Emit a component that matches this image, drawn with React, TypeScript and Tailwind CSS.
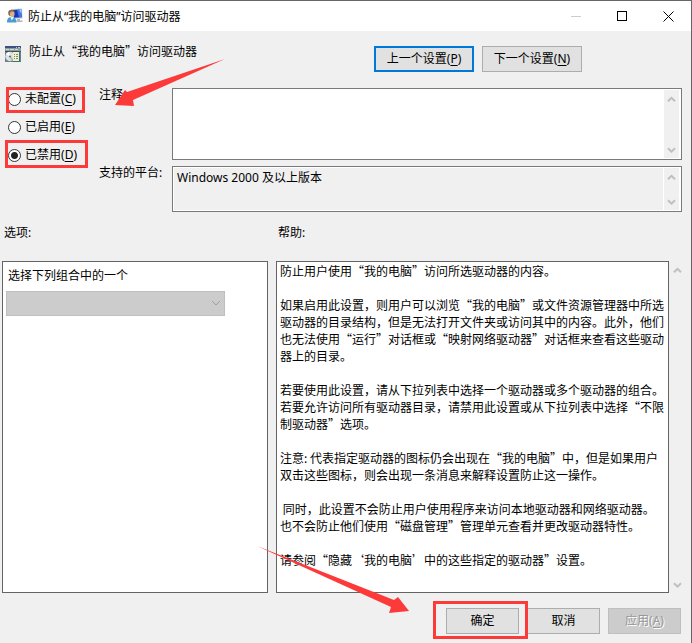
import React from 'react';

const HELP_TEXT = `防止用户使用“我的电脑”访问所选驱动器的内容。

如果启用此设置，则用户可以浏览“我的电脑”或文件资源管理器中所选驱动器的目录结构，但是无法打开文件夹或访问其中的内容。此外，他们也无法使用“运行”对话框或“映射网络驱动器”对话框来查看这些驱动器上的目录。

若要使用此设置，请从下拉列表中选择一个驱动器或多个驱动器的组合。
若要允许访问所有驱动器目录，请禁用此设置或从下拉列表中选择“不限制驱动器”选项。

注意: 代表指定驱动器的图标仍会出现在“我的电脑”中，但是如果用户双击这些图标，则会出现一条消息来解释设置防止这一操作。

 同时，此设置不会防止用户使用程序来访问本地驱动器和网络驱动器。
也不会防止他们使用“磁盘管理”管理单元查看并更改驱动器特性。

请参阅“隐藏‘我的电脑’中的这些指定的驱动器”设置。`;

const STATES = [
  { id: 'unset', text: '未配置', hotkey: 'C', mark: 'absolute -left-[2px] -top-px w-[79px] h-[26px] border-3 border-[#fd3a3a] pointer-events-none' },
  { id: 'enabled', text: '已启用', hotkey: 'E', mark: '' },
  { id: 'disabled', text: '已禁用', hotkey: 'D', mark: 'absolute -left-[3px] -top-[4px] w-[83px] h-[28px] border-3 border-[#fd3a3a] pointer-events-none' },
];

const Hotkey: React.FC<{ k: string }> = ({ k }) => (
  <>(<span className="underline underline-offset-2">{k}</span>)</>
);

const Chevron: React.FC<{ down?: boolean }> = ({ down }) => (
  <svg width="9" height="7" viewBox="0 0 9 7" fill="none" stroke="#bfbfbf" strokeWidth="2">
    <path d={down ? 'M1 1.2 L4.5 4.7 L8 1.2' : 'M1 5.3 L4.5 1.8 L8 5.3'} />
  </svg>
);

const ScrollBar: React.FC = () => (
  <div className="w-[15px] mr-px shrink-0 flex flex-col items-center justify-between pt-[6px] pb-1 bg-[#f0f0f0]">
    <Chevron />
    <Chevron down />
  </div>
);

const UserScreenIcon: React.FC = () => (
  <svg width="16" height="16" viewBox="0 0 16 16">
    <path d="M4 1 L15 0.5 L15.7 10.5 L6 11 Z" fill="#c9d2dc" />
    <path d="M5 2 L14.3 1.5 L14.7 9.3 L7 9.8 Z" fill="#1238b8" />
    <path d="M10 1.8 L14.3 1.5 L14.7 9.3 L12 9.5 Z" fill="#3f78e8" />
    <path d="M12 1.7 L14.3 1.5 L14.5 6 Z" fill="#a8d0fb" />
    <path d="M10 11 h3 v1.5 h2.5 V14 H9.5 Z" fill="#aeb6bf" />
    <path d="M0 14.5 C0 10.5 1.5 9 4.5 9 S9.5 11 9.5 14.5 Z" fill="#4a9bd0" />
    <path d="M3.3 9 L4.8 12.5 L7 9 Z" fill="#e8f4fa" />
    <circle cx="4.5" cy="5" r="3.3" fill="#8a6a4a" />
    <ellipse cx="5.2" cy="6.2" rx="2.2" ry="2.8" fill="#dcb08c" />
  </svg>
);

const PolicyIcon: React.FC = () => (
  <svg width="16" height="16" viewBox="0 0 16 16" className="shrink-0">
    <rect width="16" height="16" fill="#6d8288" />
    <rect width="16" height="2" fill="#3f4f80" />
    <path d="M11 1.5h1M13 1.5h2" stroke="#b8c2d8" />
    <rect y="2" width="16" height="3" fill="#8b9b9f" />
    <path d="M1 3.5h3M5 3.5h4M10 3.5h3" stroke="#cfd8d9" />
    <path d="M0 5.5h16" stroke="#3b4f56" />
    <circle cx="5" cy="10.5" r="4.7" fill="#dde3e3" />
    <path d="M5 10.5 L1 8 A4.5 4.5 0 0 1 4 6 Z" fill="#fff" />
    <path d="M5 10.5 L9 13 A4.5 4.5 0 0 1 6 15 Z" fill="#a8c6b6" />
    <circle cx="5" cy="10.5" r="1.1" fill="#5d7076" />
    <rect x="8" y="6" width="6" height="9" fill="#f1eed2" />
    <path d="M9 8.5h1M11 8.5h2M9 10.5h1M11 10.5h2M9 12.5h1M11 12.5h2" stroke="#958664" />
    <path d="M14.5 5v11M8 15.5h7" stroke="#2c7a70" />
  </svg>
);

const BUTTON = 'h-[26px] bg-[#e1e1e1] border border-[#adadad] pb-px';

const App: React.FC = () => (
  <div
    lang="zh-CN"
    className="relative min-h-screen flex flex-col overflow-hidden bg-[#f0f0f0] border-t border-r border-[#666] text-black text-[12px] leading-[17px] font-['Noto_Sans','Noto_Sans_CJK_SC',sans-serif]"
  >
    <div className="h-[30px] shrink-0 flex items-center bg-white pl-[7px]">
      <UserScreenIcon />
      <h1 className="flex-1 pl-[5px]">防止从“我的电脑”访问驱动器</h1>
      <button aria-label="最小化" disabled className="w-[46px] h-full flex items-center justify-center">
        <svg width="11" height="11" stroke="#ccc"><path d="M0 5.5h10" /></svg>
      </button>
      <button aria-label="最大化" className="w-[46px] h-full flex items-center justify-center">
        <svg width="11" height="11" stroke="#000" fill="none"><rect x="0.5" y="0.5" width="9" height="9" /></svg>
      </button>
      <button aria-label="关闭" className="w-[46px] h-full flex items-center justify-center">
        <svg width="11" height="11" stroke="#000"><path d="M0.5 0.5 L10.5 10.5 M10.5 0.5 L0.5 10.5" /></svg>
      </button>
    </div>

    <div className="flex items-start pt-[15px] pb-4 pl-[5px]">
      <PolicyIcon />
      <h2 className="w-[353px] pl-2 leading-[10px] font-['Noto_Sans_CJK_SC',sans-serif]">防止从“我的电脑”访问驱动器</h2>
      <div className="flex gap-2">
        <button className="w-[100px] h-[26px] bg-[#e1e1e1] border-2 border-[#0078d7] pb-px">上一个设置<Hotkey k="P" /></button>
        <button className={`w-[100px] ${BUTTON}`}>下一个设置<Hotkey k="N" /></button>
      </div>
    </div>

    <div className="flex pl-2 pr-[9px]">
      <fieldset className="w-[91px] shrink-0 flex flex-col gap-[6px]">
        {STATES.map((s) => (
          <div key={s.id} className="relative h-[22px] flex items-center">
            <label className="flex items-center gap-1">
              <input
                type="radio"
                name="state"
                defaultChecked={s.id === 'disabled'}
                className="appearance-none w-[13px] h-[13px] rounded-full border border-[#333] bg-white checked:bg-[radial-gradient(circle,#222_3px,#fff_4px)]"
              />
              <span className="pb-[2px]">{s.text}<Hotkey k={s.hotkey} /></span>
            </label>
            {s.mark && <span className={s.mark} />}
          </div>
        ))}
      </fieldset>

      <div className="flex-1 grid grid-cols-[73px_1fr] grid-rows-[72px_46px] gap-y-[6px]">
        <label htmlFor="comment" className="leading-[13px]">注释:</label>
        <div className="flex border border-[#7a7a7a] bg-white p-px">
          <textarea id="comment" className="flex-1 resize-none outline-none px-[3px]" />
          <ScrollBar />
        </div>
        <label htmlFor="platform" className="leading-[13px]">支持的平台:</label>
        <div className="flex gap-px border border-[#7a7a7a] bg-white p-px">
          <textarea
            id="platform"
            readOnly
            defaultValue="Windows 2000 及以上版本"
            className="flex-1 resize-none outline-none overflow-hidden px-[3px] pt-px bg-[#f0f0f0]"
          />
          <ScrollBar />
        </div>
      </div>
    </div>

    <div className="flex pt-3 pb-5 pl-1">
      <h3 className="w-[274px]">选项:</h3>
      <h3>帮助:</h3>
    </div>

    <div className="flex-1 flex pl-[2px] pr-[5px]">
      <section className="w-[266px] shrink-0 mr-2 border border-[#646464] bg-white px-[3px] pt-[5px]">
        <label htmlFor="drives" className="block pl-[2px] pb-[7px]">选择下列组合中的一个</label>
        <div className="relative w-[219px]">
          <select id="drives" disabled className="block appearance-none w-full h-[25px] bg-[#ccc] border border-[#bfbfbf]" />
          <svg className="absolute right-1 top-[9px] pointer-events-none" width="10" height="7" fill="none" stroke="#a0a0a0">
            <path d="M1 1 L5 5 L9 1" />
          </svg>
        </div>
      </section>
      <section className="flex-1 border border-[#646464] bg-white pl-[3px]">
        <p className="whitespace-pre-wrap font-['Noto_Sans_CJK_SC',sans-serif]">{HELP_TEXT}</p>
      </section>
      <div className="flex pl-px">
        <ScrollBar />
      </div>
    </div>

    <div className="relative flex justify-end gap-2 pt-[15px] pb-[9px] pr-[10px]">
      <div className="relative">
        <button className={`w-[73px] ${BUTTON}`}>确定</button>
        <span className="absolute -left-[13px] -top-[7px] w-[95px] h-[38px] border-3 border-[#fd3a3a] pointer-events-none" />
      </div>
      <button className={`w-[73px] ${BUTTON}`}>取消</button>
      <button disabled className="w-[73px] h-[26px] bg-[#ccc] border border-[#bfbfbf] text-[#989898] [text-shadow:1px_1px_0_#fff] pb-px">
        应用<Hotkey k="A" />
      </button>
      <svg className="absolute right-[282px] bottom-[29px] pointer-events-none" width="152" height="68" fill="#fd3a3a">
        <path d="M0 0 L137 54 L141 51 L152 65 L132 67 L134 61 Z" />
      </svg>
    </div>

    <svg className="absolute left-[115px] top-[58px] pointer-events-none" width="110" height="48" fill="#fd3a3a">
      <path d="M110 0 L12 33 L10 31 L0 46 L19 47 L18 41 Z" />
    </svg>
  </div>
);

export default App;
